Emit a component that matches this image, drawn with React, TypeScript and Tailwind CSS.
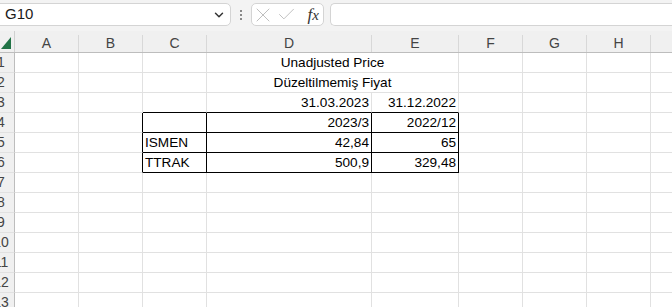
import { ChevronDown, X, Check } from "lucide-react"

const cols = ["A", "B", "C", "D", "E", "F", "G", "H", ""]
const colWidths = [
  "w-[64px]",
  "w-[64px]",
  "w-[64px]",
  "w-[165px]",
  "w-[87px]",
  "w-[64px]",
  "w-[64px]",
  "w-[64px]",
  "w-[64px]",
]

type Cell = { text?: string; align?: "left" | "right" | "center"; span?: number }

// row data, keyed by column index (0 = A)
const rows: Record<number, Record<number, Cell>> = {
  1: { 3: { text: "Unadjusted Price", align: "center", span: 2 } },
  2: { 3: { text: "Düzeltilmemiş Fiyat", align: "center", span: 2 } },
  3: { 3: { text: "31.03.2023", align: "right" }, 4: { text: "31.12.2022", align: "right" } },
  4: { 3: { text: "2023/3", align: "right" }, 4: { text: "2022/12", align: "right" } },
  5: {
    2: { text: "ISMEN" },
    3: { text: "42,84", align: "right" },
    4: { text: "65", align: "right" },
  },
  6: {
    2: { text: "TTRAK" },
    3: { text: "500,9", align: "right" },
    4: { text: "329,48", align: "right" },
  },
}

// black border on the right/bottom edge of the C4:E6 box
const blackRight = (r: number, c: number) => r >= 4 && r <= 6 && c >= 1 && c <= 4
const blackBottom = (r: number, c: number) => r >= 3 && r <= 6 && c >= 2 && c <= 4

function FormulaBar() {
  return (
    <div className="flex items-center h-[31px] bg-[#f3f3f3] pt-[3px] pb-[5px] gap-[6px]">
      {/* Name box */}
      <div className="-ml-[8px] w-[239px] h-[23px] flex items-center justify-between bg-white border border-[#d4d4d4] rounded-[5px] pl-[12px] pr-[4px]">
        <span className="text-[15px] text-[#1a1a1a]">G10</span>
        <ChevronDown size={14} strokeWidth={2.5} className="text-[#333]" />
      </div>

      {/* Dots */}
      <div className="flex flex-col gap-[2px] px-[3px]">
        <div className="w-[2px] h-[2px] bg-[#888]" />
        <div className="w-[2px] h-[2px] bg-[#888]" />
        <div className="w-[2px] h-[2px] bg-[#888]" />
      </div>

      {/* Cancel / enter / fx */}
      <div className="w-[73px] h-[23px] flex items-center bg-white border border-[#d4d4d4] rounded-[5px] pr-[4px]">
        <X size={24} strokeWidth={0.9} className="text-[#b8b8b8] -ml-[1px]" />
        <Check size={21} strokeWidth={1} className="text-[#b8b8b8] ml-[1px]" />
        <span className="ml-auto font-['Liberation_Serif',serif] italic text-[17px] text-[#333] leading-none">
          f<span className="text-[15px]">x</span>
        </span>
      </div>

      {/* Formula input */}
      <div className="flex-1 h-[23px] bg-white border border-[#d4d4d4] rounded-l-[5px] border-r-0" />
    </div>
  )
}

function ColumnHeader() {
  return (
    <div className="flex h-[22px] bg-[#f0f0f0] border-b border-[#bdbdbd]">
      <div className="w-[27px] shrink-0 relative border-r border-[#d0d0d0]">
        <div className="absolute right-[3px] bottom-[3px] w-0 h-0 border-l-[10px] border-l-transparent border-b-[12px] border-b-[#217346]" />
      </div>
      {cols.map((c, i) => (
        <div
          key={i}
          className={`${colWidths[i]} shrink-0 flex items-center justify-center border-r border-[#d8d8d8] mt-[4px] text-[14px] text-[#444]`}
        >
          {c}
        </div>
      ))}
    </div>
  )
}

function SheetRow({ r }: { r: number }) {
  const data = rows[r] || {}
  const cells = []
  for (let c = 0; c < cols.length; c++) {
    const cell = data[c]
    const span = cell?.span ?? 1
    const width = span === 2 ? "w-[252px]" : colWidths[c]
    const right = blackRight(r, c + span - 1) ? "border-r-black" : "border-r-[#e1e1e1]"
    const bottom = blackBottom(r, c) ? "border-b-black" : "border-b-[#e1e1e1]"
    const align =
      cell?.align === "right"
        ? "justify-end"
        : cell?.align === "center"
          ? "justify-center"
          : "justify-start"
    cells.push(
      <div
        key={c}
        className={`${width} shrink-0 h-[20px] flex items-end ${align} px-[2px] pb-[1px] border-r border-b ${right} ${bottom} text-[13.6px] text-black leading-[16px] whitespace-nowrap`}
      >
        {cell?.text}
      </div>
    )
    c += span - 1
  }
  return (
    <div className="flex">
      <div className="w-[27px] shrink-0 h-[20px] flex items-center justify-center bg-[#f0f0f0] border-r border-r-[#bdbdbd] border-b border-b-[#e1e1e1] text-[14px] text-[#444]">
        {r}
      </div>
      {cells}
    </div>
  )
}

export default function App() {
  return (
    <div className="w-[672px] h-[307px] overflow-hidden bg-white font-['Liberation_Sans',Arial,sans-serif]">
      <FormulaBar />
      <div className="-ml-[12px]">
        <ColumnHeader />
        {Array.from({ length: 13 }, (_, i) => (
          <SheetRow key={i} r={i + 1} />
        ))}
      </div>
    </div>
  )
}
